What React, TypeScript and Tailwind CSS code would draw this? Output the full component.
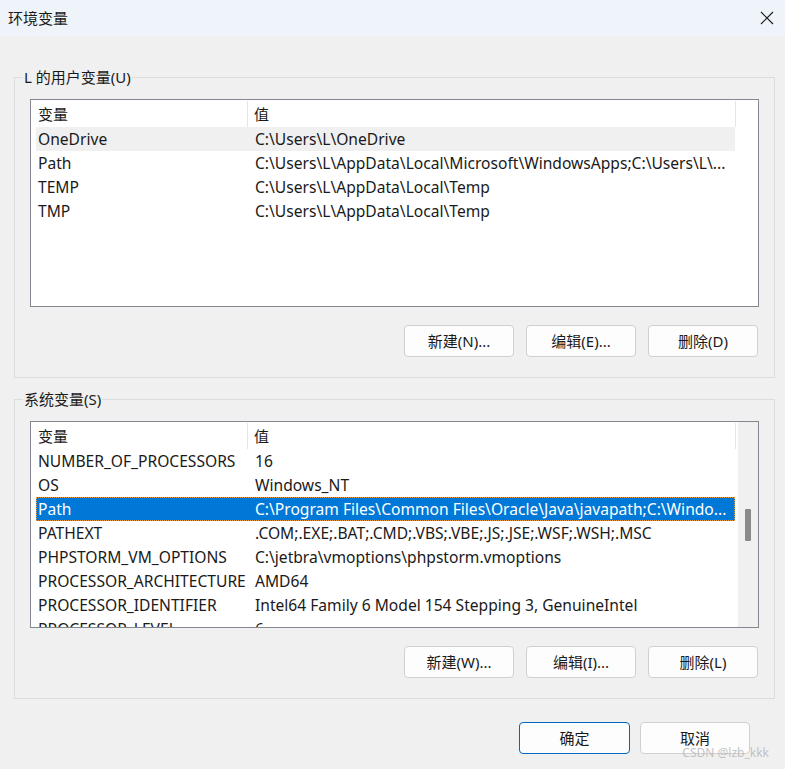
import React from "react";

type Row = { name: string; value: string };

const userVars: Row[] = [
  { name: "OneDrive", value: "C:\\Users\\L\\OneDrive" },
  { name: "Path", value: "C:\\Users\\L\\AppData\\Local\\Microsoft\\WindowsApps;C:\\Users\\L\\..." },
  { name: "TEMP", value: "C:\\Users\\L\\AppData\\Local\\Temp" },
  { name: "TMP", value: "C:\\Users\\L\\AppData\\Local\\Temp" },
];

const systemVars: Row[] = [
  { name: "NUMBER_OF_PROCESSORS", value: "16" },
  { name: "OS", value: "Windows_NT" },
  { name: "Path", value: "C:\\Program Files\\Common Files\\Oracle\\Java\\javapath;C:\\Windo..." },
  { name: "PATHEXT", value: ".COM;.EXE;.BAT;.CMD;.VBS;.VBE;.JS;.JSE;.WSF;.WSH;.MSC" },
  { name: "PHPSTORM_VM_OPTIONS", value: "C:\\jetbra\\vmoptions\\phpstorm.vmoptions" },
  { name: "PROCESSOR_ARCHITECTURE", value: "AMD64" },
  { name: "PROCESSOR_IDENTIFIER", value: "Intel64 Family 6 Model 154 Stepping 3, GenuineIntel" },
  { name: "PROCESSOR_LEVEL", value: "6" },
];

function WinButton({ children, primary }: { children: React.ReactNode; primary?: boolean }) {
  return (
    <button
      className={
        primary
          ? "w-[111px] h-[32px] rounded-[4px] border border-[#0067c0] bg-[#fdfdfd] text-[15px] text-[#1a1a1a]"
          : "w-[110px] h-[32px] rounded-[4px] border border-[#d0d0d0] bg-[#fdfdfd] text-[15px] text-[#1a1a1a]"
      }
    >
      {children}
    </button>
  );
}

function VarList({
  rows,
  hovered,
  selected,
  scroll,
}: {
  rows: Row[];
  hovered?: number;
  selected?: number;
  scroll?: boolean;
}) {
  return (
    <div className="flex h-full border border-[#828790] bg-white overflow-hidden">
      <div className="flex-1 flex flex-col pl-[5px] pt-[1px]">
        {/* Header */}
        <div className="flex h-[26px] shrink-0 items-center w-[700px]">
          <div className="w-[212px] h-full flex items-center pl-[2px] border-r border-[#e5e5e5]">变量</div>
          <div className="flex-1 h-full flex items-center pl-[6px] border-r border-[#e5e5e5]">值</div>
        </div>
        {rows.map((r, i) => (
          <div
            key={r.name}
            className={
              i === selected
                ? "flex h-[24px] shrink-0 items-center pt-[2px] w-[699px] text-[15.6px] bg-[#0078d7] text-white outline outline-1 outline-dotted outline-[#e99a3c] -outline-offset-1"
                : i === hovered
                ? "flex h-[24px] shrink-0 items-center pt-[2px] w-[699px] text-[15.6px] bg-[#f0f0f0]"
                : "flex h-[24px] shrink-0 items-center pt-[2px] w-[699px] text-[15.6px]"
            }
          >
            <div className="w-[213px] pl-[2px] whitespace-nowrap overflow-hidden">{r.name}</div>
            <div className="flex-1 pl-[6px] whitespace-nowrap overflow-hidden">{r.value}</div>
          </div>
        ))}
      </div>
      {scroll ? (
        <div className="w-[21px] bg-[#f0f0f0] flex flex-col items-center pt-[87px] border-l border-white">
          <div className="w-[6px] h-[32px] bg-[#8a8a8a] rounded-[1px]" />
        </div>
      ) : (
        <div className="w-[21px]" />
      )}
    </div>
  );
}

function GroupBox({ label, children }: { label: string; children: React.ReactNode }) {
  return (
    <div className="relative border border-[#dcdcdc] px-[15px] pt-[21px] pb-[20px]">
      <span className="absolute left-[8px] top-[-11px] leading-[20px] px-[1px] bg-[#f0f0f0]">{label}</span>
      {children}
    </div>
  );
}

export default function App() {
  return (
    <div
      className="w-[785px] h-[769px] bg-[#f0f0f0] text-[15px] text-[#1a1a1a] overflow-hidden relative"
      style={{ fontFamily: '"Noto Sans", "Noto Sans CJK SC", sans-serif' }}
    >
      {/* Title bar */}
      <div className="h-[36px] bg-[#eef4f9] flex items-center justify-between pl-[8px] pr-[9px]">
        <span>环境变量</span>
        <svg width="14" height="14" viewBox="0 0 14 14" className="mr-[2px]">
          <path d="M1 1 L13 13 M13 1 L1 13" stroke="#1a1a1a" strokeWidth="1.1" />
        </svg>
      </div>

      <div className="flex flex-col pl-[14px] pr-[10px] pt-[41px]">
        <GroupBox label="L 的用户变量(U)">
          <div className="h-[208px]">
            <VarList rows={userVars} hovered={0} />
          </div>
          <div className="flex justify-end gap-[12px] mt-[18px] pr-[1px]">
            <WinButton>新建(N)...</WinButton>
            <WinButton>编辑(E)...</WinButton>
            <WinButton>删除(D)</WinButton>
          </div>
        </GroupBox>

        <div className="h-[21px]" />

        <GroupBox label="系统变量(S)">
          <div className="h-[207px]">
            <VarList rows={systemVars} selected={2} scroll />
          </div>
          <div className="flex justify-end gap-[12px] mt-[18px] pr-[1px]">
            <WinButton>新建(W)...</WinButton>
            <WinButton>编辑(I)...</WinButton>
            <WinButton>删除(L)</WinButton>
          </div>
        </GroupBox>

        <div className="flex justify-end gap-[10px] mt-[23px] pr-[25px]">
          <WinButton primary>确定</WinButton>
          <WinButton>取消</WinButton>
        </div>
      </div>

      <span className="absolute right-[16px] bottom-[7px] text-[12px] text-[#b4b4b4]/80">
        CSDN @lzb_kkk
      </span>
    </div>
  );
}
